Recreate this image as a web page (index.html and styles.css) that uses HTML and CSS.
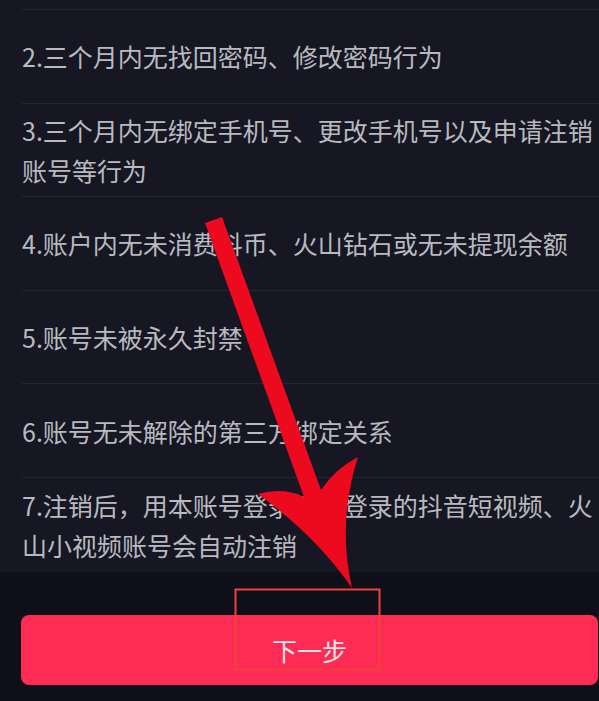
FILE: index.html
```html
<!DOCTYPE html>
<html lang="zh-CN">
<head>
<meta charset="utf-8">
<title>注销账号</title>
<link rel="stylesheet" href="styles.css">
</head>
<body>
<div class="page">
  <div class="list">
    <div class="item item--cut"></div>
    <div class="item"><p>2.三个月内无找回密码、修改密码行为</p></div>
    <div class="item"><p>3.三个月内无绑定手机号、更改手机号以及申请注销账号等行为</p></div>
    <div class="item"><p>4.账户内无未消费抖币、火山钻石或无未提现余额</p></div>
    <div class="item"><p>5.账号未被永久封禁</p></div>
    <div class="item"><p>6.账号无未解除的第三方绑定关系</p></div>
    <div class="item item--last"><p>7.注销后，用本账号登录授权登录的抖音短视频、火山小视频账号会自动注销</p></div>
  </div>
  <div class="footer">
    <button class="next" type="button">下一步</button>
  </div>
  <svg class="annot" viewBox="0 0 599 701" width="599" height="701" aria-hidden="true">
    <path class="arrow" d="M205,223 L222,217 L321,490 Q336,468 358,457 Q337,522 352,588 Q316,536 258,494 Q283,487 304,497 Z"/>
    <rect class="mark" x="235.5" y="589.5" width="144" height="80"/>
  </svg>
</div>
</body>
</html>
```
FILE: styles.css
```css
html, body {
  margin: 0;
  padding: 0;
  background: #0e0f18;
}

.page {
  position: relative;
  width: 599px;
  height: 701px;
  overflow: hidden;
  background: #0e0f18;
  font-family: "Noto Sans CJK SC", "Noto Sans", sans-serif;
}

.list {
  background: #161722;
  padding-left: 22px;
}

.item {
  box-sizing: border-box;
  height: 93.6px;
  border-bottom: 1px solid #252631;
  display: flex;
  align-items: center;
}

.item--cut {
  height: 10px;
}

.item--last {
  height: 94px;
  border-bottom: none;
}

.item p {
  margin: 0;
  font-size: 25px;
  line-height: 40px;
  color: #b9bac0;
}

.footer {
  padding: 43px 1px 0 21px;
}

.next {
  display: block;
  width: 100%;
  height: 70px;
  border: 0;
  border-radius: 8px;
  background: #fe2b54;
  color: #f7e6ea;
  font-family: inherit;
  font-size: 25px;
  padding: 0;
}

.annot {
  position: absolute;
  left: 0;
  top: 0;
  pointer-events: none;
}

.arrow {
  fill: #ee0a1e;
}

.mark {
  fill: none;
  stroke: #f0423c;
  stroke-width: 2;
}
```
